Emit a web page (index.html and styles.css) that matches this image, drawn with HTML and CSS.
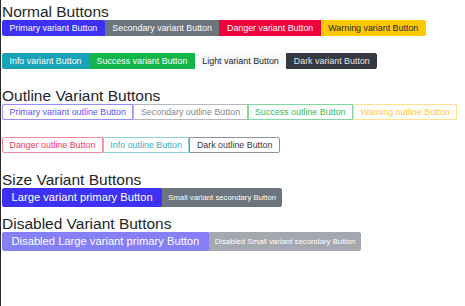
FILE: index.html
```html
<!DOCTYPE html>
<html lang="en">
  <head>
    <meta charset="utf-8">
    <title>Button variants</title>
    <link rel="stylesheet" href="styles.css">
  </head>
  <body>
    <div class="section">
      <h3>Normal Buttons</h3>
      <div class="btn-group">
        <button class="btn primary">Primary variant Button</button>
        <button class="btn secondary">Secondary variant Button</button>
        <button class="btn danger">Danger variant Button</button>
        <button class="btn warning">Warning variant Button</button>
      </div>
      <div class="btn-group">
        <button class="btn info">Info variant Button</button>
        <button class="btn success">Success variant Button</button>
        <button class="btn light">Light variant Button</button>
        <button class="btn dark">Dark variant Button</button>
      </div>
    </div>

    <div class="section">
      <h3>Outline Variant Buttons</h3>
      <div class="btn-group outline">
        <button class="btn primary">Primary variant outline Button</button>
        <button class="btn secondary">Secondary outline Button</button>
        <button class="btn success">Success outline Button</button>
        <button class="btn warning">Warning outline Button</button>
      </div>
      <div class="btn-group outline">
        <button class="btn danger">Danger outline Button</button>
        <button class="btn info">Info outline Button</button>
        <button class="btn dark">Dark outline Button</button>
      </div>
    </div>

    <div class="section size">
      <h3>Size Variant Buttons</h3>
      <div class="btn-group">
        <button class="btn primary lg">Large variant primary Button</button>
        <button class="btn secondary sm">Small variant secondary Button</button>
      </div>
    </div>

    <div class="section">
      <h3>Disabled Variant Buttons</h3>
      <div class="btn-group">
        <button class="btn primary lg" disabled>Disabled Large variant primary Button</button>
        <button class="btn secondary sm" disabled>Disabled Small variant secondary Button</button>
      </div>
    </div>
  </body>
</html>
```

FILE: styles.css
```css
html, body
{
	height: 100%;
}
body
{
	margin: 0;
	padding: 4px 0 0 1px;
	box-sizing: border-box;
	border-left: 1px solid #2a2a2a;
	font-family: "Liberation Sans", Arial, sans-serif;
	color: #212529;
	background: #fff;
}
h3
{
	margin: 0 0 1px;
	font-size: 15.5px;
	line-height: 15px;
	font-weight: normal;
}
.section
{
	display: flex;
	flex-direction: column;
	align-items: flex-start;
	margin-bottom: 2px;
}
.btn-group
{
	display: inline-flex;
	margin-bottom: 17px;
}
.section.size .btn-group
{
	margin-bottom: 7px;
}
.btn
{
	font-family: inherit;
	font-size: 8.9px;
	line-height: 12px;
	padding: 1px 6.5px;
	margin: 0;
	border: 1px solid transparent;
	border-radius: 0;
	color: #fff;
	white-space: nowrap;
	cursor: pointer;
}
.btn:first-child
{
	border-top-left-radius: 2px;
	border-bottom-left-radius: 2px;
}
.btn:last-child
{
	border-top-right-radius: 2px;
	border-bottom-right-radius: 2px;
}
.btn.lg
{
	font-size: 11.2px;
	line-height: 15px;
	padding: 1px 8.5px;
}
.btn.sm
{
	font-size: 7.8px;
	padding: 1px 5px;
}

/* solid variants */
.primary { background: #3c31f5; border-color: #3c31f5; }
.secondary { background: #6c757d; border-color: #6c757d; }
.danger { background: #f0003c; border-color: #f0003c; }
.warning { background: #ffc800; border-color: #ffc800; color: #212529; }
.info { background: #17a2b8; border-color: #17a2b8; }
.success { background: #12b54a; border-color: #12b54a; }
.light { background: #f8f9fa; border-color: #f8f9fa; color: #212529; }
.dark { background: #343a40; border-color: #343a40; color: #e4e6e8; }

.btn:disabled
{
	opacity: 0.62;
	cursor: default;
}

/* outline variants */
.outline .btn
{
	background: #fff;
}
.outline .primary { border-color: #948ef7; color: #5b52f2; }
.outline .secondary { border-color: #b6babe; color: #80878d; }
.outline .success { border-color: #86d8a2; color: #33bb62; }
.outline .warning { border-color: #ffe08c; color: #ffc640; }
.outline .danger { border-color: #f5869c; color: #ef3a5f; }
.outline .info { border-color: #8fd2dc; color: #35b1c3; }
.outline .dark { border-color: #8d9094; color: #343a40; }
```
